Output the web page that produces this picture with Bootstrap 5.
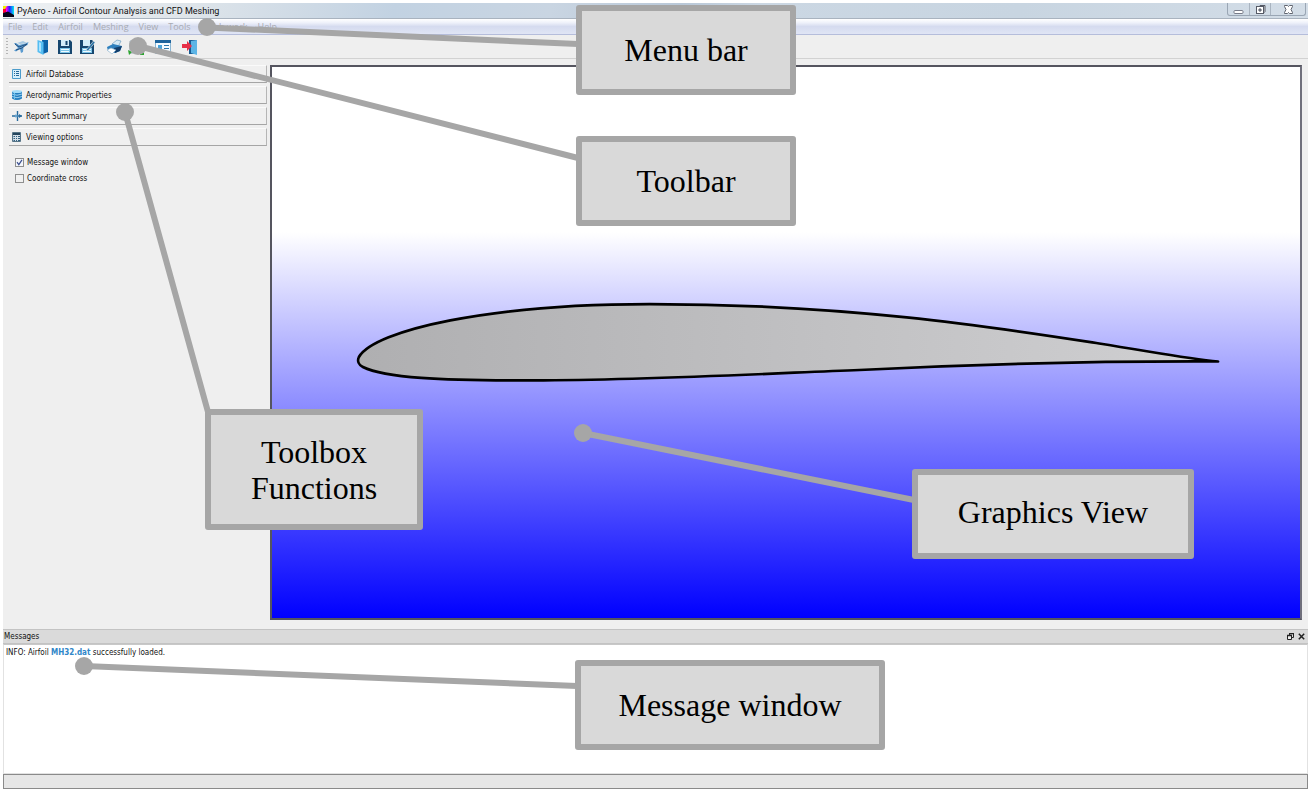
<!DOCTYPE html>
<html lang="en">
<head>
<meta charset="utf-8">
<meta name="viewport" content="width=device-width, initial-scale=1">
<title>PyAero - Airfoil Contour Analysis and CFD Meshing</title>
<link rel="stylesheet" href="https://cdn.jsdelivr.net/npm/bootstrap@5.3.0/dist/css/bootstrap.min.css">
<style>
  body { font: 8px/12px "DejaVu Sans Condensed", "DejaVu Sans", sans-serif; color: #111; background: #fff; padding: 3px; }
  .app-window { background: #efefef; }
  .title-bar { height: 16px; font: 9px/17px Roboto, sans-serif; color: #111; border-bottom: 1px solid #a9b3bf;
    background: linear-gradient(100deg, #eef1f4 0, #dfe5ea 14%, #c2d2e2 30%, #c9d5e2 42%, #b9c8d8 52%, #cbd7e3 58%, #c8d5e1 78%, #d3dde7 100%); }
  .app-logo { margin: 3px 3px 0 0; }
  .win-controls { height: 13px; border: 1px solid #9aa6b4; border-top: 0; border-radius: 0 0 3px 3px; margin-right: 2px; }
  .win-controls button { width: 21px; border: 0; padding: 0; background: transparent; line-height: 0; }
  .win-controls button + button { border-left: 1px solid #a9b4c0; }
  .win-controls button:last-child { width: 35px; }
  .menu-bar { height: 16px; font: 9px/16px "Open Sans", sans-serif; border-bottom: 1px solid #b5bddb; gap: 10px; padding-left: 5px;
    background: linear-gradient(#fff, #eef1fa 25%, #d5dbef 50%, #e0e5f5 100%); }
  .menu-bar a { color: #a8abb3; text-decoration: none; }
  .tool-bar { height: 24px; border-bottom: 1px solid #d2d2d2; padding-left: 3px; }
  .grip { width: 2px; height: 17px; margin-right: 5px; background: repeating-linear-gradient(#b5b5b5 0 1px, transparent 1px 3px); }
  .tool-bar button { border: 0; padding: 0; width: 16px; height: 16px; margin-right: 6px; background: transparent; line-height: 0; }
  .tool-sep { width: 5px; }
  .workspace { padding: 6px 6px 9px; }
  .toolbox { width: 258px; margin-right: 3px; }
  .tab-button { height: 18px; border: 0; border-right: 1px solid #b5b5b5; border-bottom: 1px solid #a5a5a5; border-top: 1px solid #fafafa;
    background: #f0f0f0; font: inherit; color: inherit; text-align: left; padding: 1px 3px 0; margin-bottom: 3px; gap: 4px; }
  .tab-button svg { margin-bottom: 2px; }
  .option-list { padding-top: 5px; }
  .option { height: 16px; gap: 3px; padding-left: 6px; line-height: 14px; }
  .option input { appearance: none; width: 9px; height: 9px; margin: 0; border: 1px solid #8e8f8f; background: #f1f1f1; }
  .option label { padding-top: 1px; }
  .option input:checked { background: #f4f6fa url("data:image/svg+xml,%3Csvg xmlns='http://www.w3.org/2000/svg' viewBox='0 0 7 7'%3E%3Cpath d='M1 3.2 2.8 5.6 6 .8' fill='none' stroke='%233b4f8f' stroke-width='1.2'/%3E%3C/svg%3E"); }
  .graphics-view { border: 2px solid #55555f; border-right-color: #70707c; min-width: 0; min-height: 0;
    background: linear-gradient(#fff 30%, #00f 100%); }
  .graphics-view svg { display: block; width: 100%; height: 100%; }
  .dock-title { height: 15px; background: #dadada; border: solid #c3c3c3; border-width: 1px 0; padding: 0 3px 0 1px; }
  .dock-title button { border: 0; padding: 0; background: transparent; line-height: 0; margin-left: 4px; }
  .message-log { height: 130px; background: #fff; border: 1px solid #e2e2e2; border-top: 1px solid #c8c8c8; padding: 2px; }
  .message-log b { color: #2f86c8; }
  .status-line { height: 15px; border: 1px solid #8a8a8a; background: #e6e6e6; }
  .annotations { left: 0; top: 0; width: 1311px; height: 792px; max-width: 100%; max-height: 100%; pointer-events: none; overflow: hidden; }
  .callout-box { border: 6px solid #a6a6a6; border-radius: 3px; background: #d9d9d9; color: #000;
    font: 32px/36px "Liberation Serif", serif; }
  .c-menu { left: 576px; top: 5px; width: 220px; height: 90px; }
  .c-tool { left: 576px; top: 136px; width: 220px; height: 90px; }
  .c-box { left: 205px; top: 409px; width: 218px; height: 121px; }
  .c-view { left: 912px; top: 469px; width: 282px; height: 90px; padding-bottom: 4px; }
  .c-msg { left: 575px; top: 660px; width: 310px; height: 90px; }
</style>
</head>
<body class="vh-100 position-relative overflow-hidden">
<div class="app-window d-flex flex-column h-100">
  <header class="title-bar d-flex flex-shrink-0">
    <svg class="app-logo" width="11" height="11" viewBox="0 0 11 11" aria-hidden="true">
      <defs><linearGradient id="hue"><stop stop-color="#f00"/><stop offset=".3" stop-color="#f0f"/><stop offset=".6" stop-color="#22f"/><stop offset="1" stop-color="#0ee"/></linearGradient></defs>
      <path fill="url(#hue)" d="M0 0h11v11H0z"/><path fill="#ee0" d="M0 0h4L2 3H0z"/><path fill="#05051a" d="M0 7 5 5.500 11 9v2H0z"/><path fill="#f03" d="M0 3h3v3H0z"/>
    </svg>
    <span>PyAero - Airfoil Contour Analysis and CFD Meshing</span>
    <div class="win-controls d-flex ms-auto">
      <button aria-label="Minimize"><svg width="11" height="11"><rect x="1" y="6.500" width="9" height="3" rx="1" fill="#fff" stroke="#777b88"/></svg></button>
      <button aria-label="Restore"><svg width="11" height="11"><path d="M3.500 3 5 1.500h5v6L8.500 9" fill="#ddd" stroke="#555a66"/><rect x="1.500" y="2.500" width="7" height="7" fill="#fff" stroke="#555a66"/><path d="M4 5h2v2H4z" fill="#aab" stroke="#555a66"/></svg></button>
      <button aria-label="Close"><svg width="11" height="11"><path d="M1.500 1.500h3l1 1 1-1h3v1L8 5.500l1.500 3v1h-3l-1-1-1 1h-3v-1l1.500-3-1.500-3z" fill="#fff" stroke="#60646f"/></svg></button>
    </div>
  </header>
  <nav class="menu-bar d-flex flex-shrink-0" aria-label="Main menu">
    <a href="#">File</a><a href="#">Edit</a><a href="#">Airfoil</a><a href="#">Meshing</a><a href="#">View</a><a href="#">Tools</a><a href="#">Batch work</a><a href="#">Help</a>
  </nav>
  <div class="tool-bar d-flex align-items-center flex-shrink-0" role="toolbar" aria-label="Tools">
    <span class="grip"></span>
    <button aria-label="Load airfoil"><svg width="16" height="16" viewBox="0 0 16 16"><path d="M1 4 3 4 6 6 12 4.500 15.500 3 14.500 6 10.500 8 10 13 8 14 7 10 3 12.500 1 11.500 5 9z" fill="#5b9bd0"/><path d="m2 5 4 3 8-3-5 4-6 2" fill="none" stroke="#26507d"/><path d="m7 5-3-1 6-2 4 2z" fill="#a8c9e2"/></svg></button>
    <button aria-label="Open"><svg width="16" height="16" viewBox="0 0 16 16"><path d="M7 1h6v12l-5 2z" fill="#0c62a8"/><path d="m2.500 1 6 2v13l-6-3z" fill="#55bdf2"/><path d="m4 3 2 1v9l-2-1z" fill="#a8e2ff"/></svg></button>
    <button aria-label="Save"><svg width="16" height="16" viewBox="0 0 16 16"><path d="M1 1h12l2 2v12H1z" fill="#17466e"/><path d="M4 1h8v6H4z" fill="#d4edf9"/><path d="M8.500 2h2v4h-2z" fill="#17466e"/><path d="M3 9h10v5H3z" fill="#7cc5e9"/><path d="M4 10.500h8M4 12.500h8" stroke="#eefaff"/></svg></button>
    <button aria-label="Save as"><svg width="16" height="16" viewBox="0 0 16 16"><path d="M1 1h12l2 2v12H1z" fill="#17466e"/><path d="M4 1h7v6H4z" fill="#d4edf9"/><path d="M3 9h10v5H3z" fill="#7cc5e9"/><path d="M4 10.500h8M4 12.500h8" stroke="#eefaff"/><path d="m7 11 7.500-9 1.500 1.500L9 12z" fill="#2c73a5" stroke="#efefef" stroke-width=".6"/></svg></button>
    <span class="tool-sep"></span>
    <button aria-label="Print"><svg width="16" height="16" viewBox="0 0 16 16"><path d="m6 5 5-4 4 1-3 6z" fill="#d5e9f5" stroke="#5b91b9" stroke-width=".6"/><path d="m1 8 6-3 9 2-2 5-5 2-7-2z" fill="#2f80be"/><path d="m8 9 8-2-2 5-5 2z" fill="#123e6c"/><path d="m1 11 4-2 5 2-4 4z" fill="#fff" stroke="#8bb1cc" stroke-width=".6"/></svg></button>
    <button aria-label="Fit view"><svg width="16" height="16" viewBox="0 0 16 16"><path d="M2 2h13v12H2z" fill="#e9edf0" stroke="#9ba9b5"/><path d="m0 11 4 2-3 3zM12 13h4v3h-4z" fill="#2ba52e"/></svg></button>
    <span class="tool-sep"></span>
    <button aria-label="Toggle list"><svg width="16" height="16" viewBox="0 0 16 16"><path d="M.5 2.500h15v12H.5z" fill="#f4fbff" stroke="#8ab5d2"/><path d="M0 1h16v3H0z" fill="#1d649d"/><path d="M3 6h4v4H3z" fill="#49a3da"/><path d="M9 6.500h5M9 9.500h5M9 12.500h5" stroke="#2d78ac"/><path d="M3 12h4v1H3z" fill="#46a85a"/></svg></button>
    <span class="tool-sep"></span>
    <button aria-label="Exit"><svg width="16" height="16" viewBox="0 0 16 16"><path d="M7 1h8v14H7z" fill="#17588f"/><path d="m9 2 6-1v15l-6-2z" fill="#5cb4e5"/><path d="M0 5h5V2l5 5-5 5V9H0z" fill="#e62f48"/></svg></button>
  </div>

  <main class="workspace d-flex flex-grow-1 overflow-hidden">
    <aside class="toolbox d-flex flex-column flex-shrink-0">
      <button class="tab-button d-flex align-items-center"><svg width="10" height="10"><path d="M.5.5h8v9h-8z" fill="#d8effb" stroke="#4c9ccb"/><path d="M2 2.500h1M2 4.500h1M2 6.500h1M4 2.500h3M4 4.500h3M4 6.500h3" stroke="#23679a"/></svg>Airfoil Database</button>
      <button class="tab-button d-flex align-items-center"><svg width="10" height="10"><path d="M0 1.500v7q5 3 10 0v-7z" fill="#237ec0"/><ellipse cx="5" cy="1.500" rx="5" ry="1.500" fill="#a5dcf8"/><path d="M0 4q5 2.500 10 0M0 6.500q5 2.500 10 0" fill="none" stroke="#bce5fa" stroke-width=".8"/><path d="M2.500 3v6" stroke="#6cc4f0"/></svg>Aerodynamic Properties</button>
      <button class="tab-button d-flex align-items-center"><svg width="10" height="10"><path d="M0 5h10M5.500 0v10" stroke="#286b9f" stroke-width="1.400"/><path d="M3 3.500 5.500 4v2L3 6.500" fill="#67a4ce"/><path d="m7 3 3 2-3 2z" fill="#286b9f"/></svg>Report Summary</button>
      <button class="tab-button d-flex align-items-center"><svg width="10" height="10"><path d="M.5.500h8v9h-8z" fill="#d3dfe7" stroke="#587587"/><path d="M1 1h7v2H1z" fill="#25455d"/><path d="M1.500 4.500H3M4 4.500h1M6 4.500h2M1.500 6.500H3M4 6.500h1M6 6.500h2M1.500 8.500H3M4 8.500h1M6 8.500h2" stroke="#315f80"/></svg>Viewing options</button>
      <div class="option-list">
        <div class="option d-flex align-items-center"><input type="checkbox" id="optMsg" checked><label for="optMsg">Message window</label></div>
        <div class="option d-flex align-items-center"><input type="checkbox" id="optCross"><label for="optCross">Coordinate cross</label></div>
      </div>
    </aside>
    <section class="graphics-view flex-grow-1" aria-label="Graphics view">
      <svg viewBox="272 67 1029 551" role="img" aria-label="Airfoil MH32">
        <defs><linearGradient id="foil"><stop stop-color="#afafb1"/><stop offset="1" stop-color="#d0d0d2"/></linearGradient></defs>
        <path d="M1219 361.500 C1190 359 1160 353 1100 343.500 C1000 328 850 304 650 304 C490 304 375 330 359 357 C357 361 359 365 363 367 C385 378 440 380.500 533 380.500 C650 380 760 374 860 370 C980 364 1090 361 1219 361.500Z" fill="url(#foil)" stroke="#000" stroke-width="2.700" stroke-linejoin="round"/>
      </svg>
    </section>
  </main>

  <section class="flex-shrink-0" aria-label="Messages">
    <div class="dock-title d-flex align-items-center">
      <span class="me-auto">Messages</span>
      <button aria-label="Float"><svg width="7" height="7"><path d="M2.500 2V.500h4v4H5" fill="none" stroke="#222"/><path d="M.5 2.500h4v4h-4z" fill="#eee" stroke="#222"/><path d="M0 2.500h5M2 .500h5" stroke="#222" stroke-width="1.500"/></svg></button>
      <button aria-label="Close messages"><svg width="7" height="7"><path d="m.8.800 5.400 5.400M6.200.800.800 6.200" stroke="#222" stroke-width="1.500"/></svg></button>
    </div>
    <div class="message-log">INFO: Airfoil <b>MH32.dat</b> successfully loaded.</div>
  </section>
  <footer class="status-line flex-shrink-0"></footer>
</div>

<div class="annotations position-absolute">
  <svg class="position-absolute" width="1311" height="792" aria-hidden="true">
    <g stroke="#a6a6a6" stroke-width="6" fill="none"><path d="M207 27.500 578 44M138 46 578 158M125 112 208 412M583 433l331 67M84 666l493 20"/></g>
    <g fill="#a6a6a6"><circle cx="207" cy="27" r="9"/><circle cx="138" cy="46" r="9"/><circle cx="125" cy="112" r="9"/><circle cx="583" cy="433" r="9"/><circle cx="84" cy="666" r="9"/></g>
  </svg>
  <div class="callout-box c-menu position-absolute d-flex align-items-center justify-content-center">Menu bar</div>
  <div class="callout-box c-tool position-absolute d-flex align-items-center justify-content-center">Toolbar</div>
  <div class="callout-box c-box position-absolute d-flex align-items-center justify-content-center text-center">Toolbox<br>Functions</div>
  <div class="callout-box c-view position-absolute d-flex align-items-center justify-content-center">Graphics View</div>
  <div class="callout-box c-msg position-absolute d-flex align-items-center justify-content-center">Message window</div>
</div>
<script src="https://cdn.jsdelivr.net/npm/bootstrap@5.3.0/dist/js/bootstrap.bundle.min.js"></script>
</body>
</html>
